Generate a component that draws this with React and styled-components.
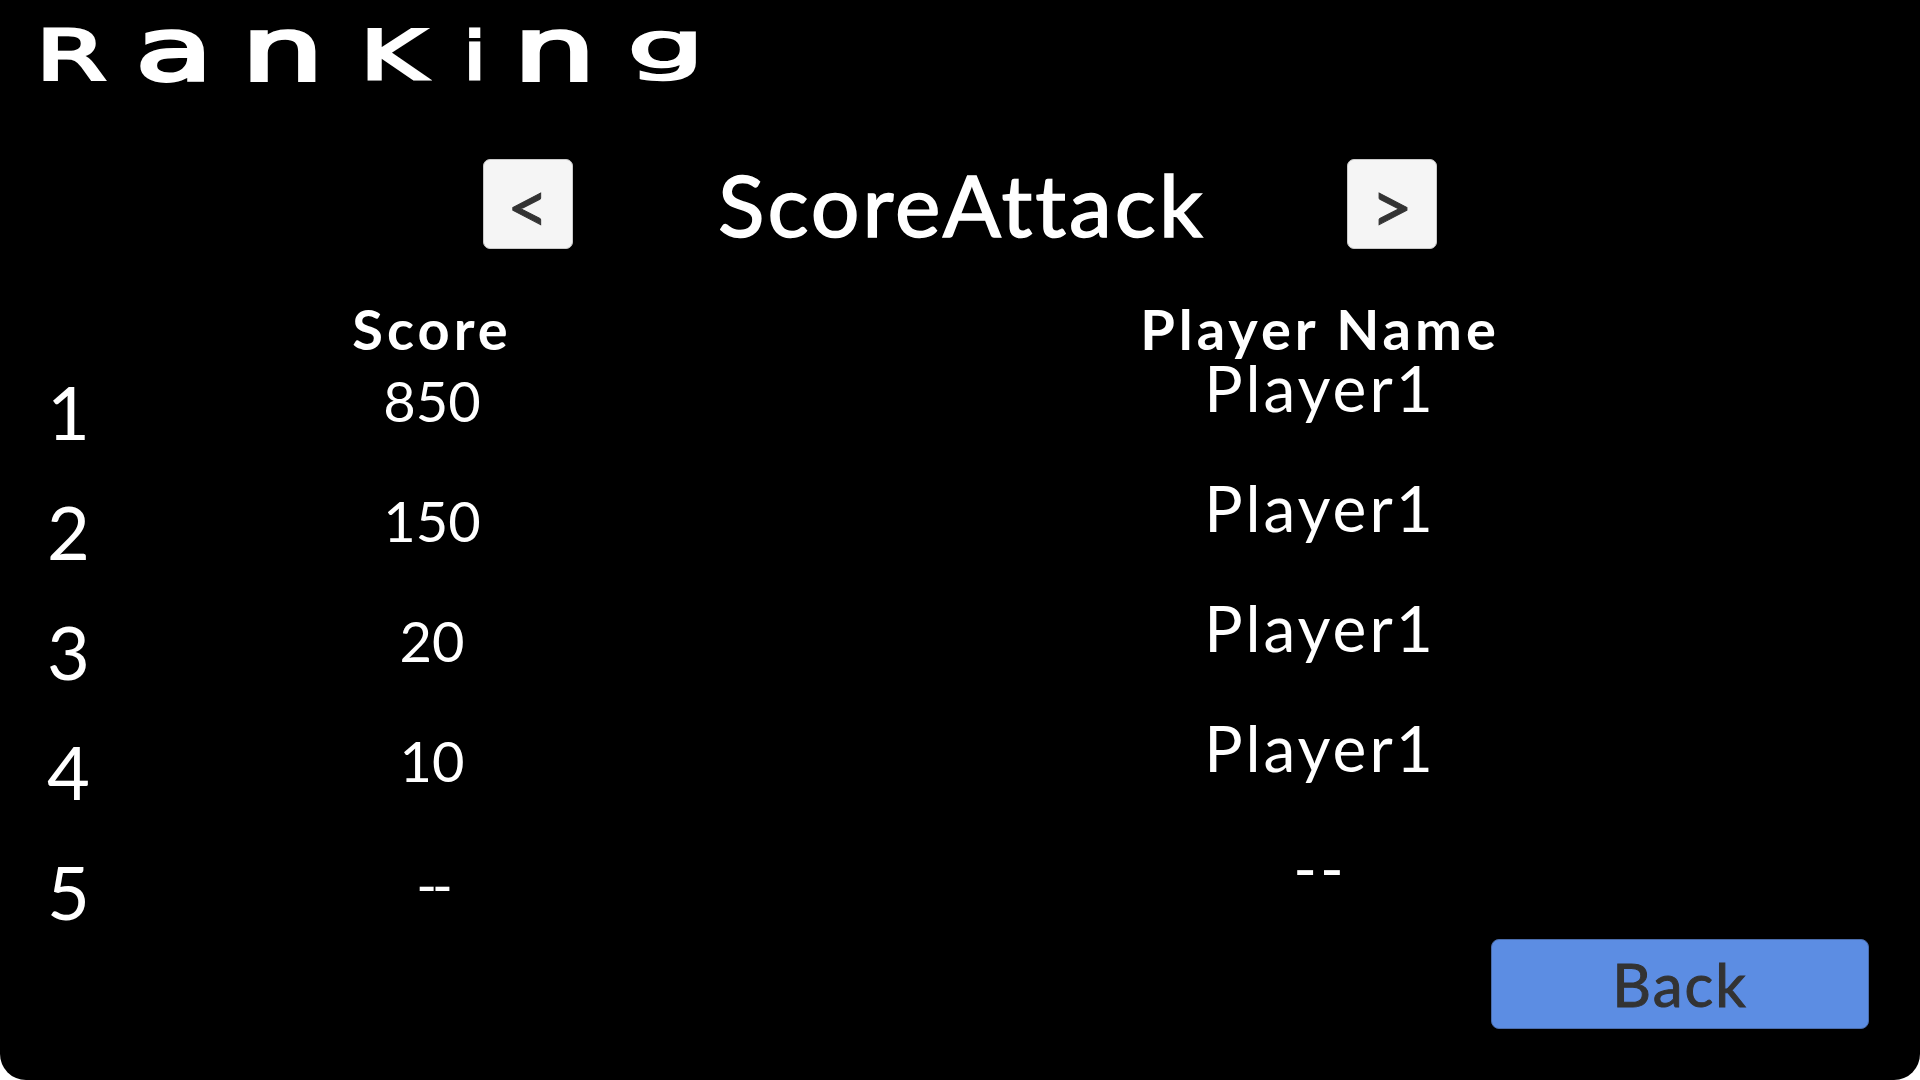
import styled, { createGlobalStyle } from 'styled-components';

const GlobalStyle = createGlobalStyle`
  html, body {
    margin: 0;
    padding: 0;
    background: #fff;
  }
  * {
    box-sizing: border-box;
  }
`;

const Screen = styled.div`
  width: 1920px;
  height: 1080px;
  overflow: hidden;
  background: #000;
  color: #fff;
  border-radius: 0 0 26px 26px;
  font-family: Lato, "Open Sans", sans-serif;
  display: flex;
  flex-direction: column;
`;

const Heading = styled.h1`
  display: flex;
  flex: none;
  align-items: baseline;
  height: 159px;
  margin: 0;
  padding: 20px 0 0 38px;
  font-family: "DejaVu Sans", sans-serif;
  font-size: 70px;
  font-weight: 400;
  line-height: 70px;
  -webkit-text-stroke: 3px #fff;
`;

const Letter = styled.span`
  display: block;
  flex: none;
  width: ${(p) => p.$w}px;
  margin-right: ${(p) => p.$gap}px;
  text-align: center;
  transform-origin: 50% 76%;
  transform: translateY(${(p) => p.$y || 0}px) scale(${(p) => p.$sx}, ${(p) => p.$sy});
`;

const ModeBar = styled.div`
  display: flex;
  flex: none;
  align-items: center;
  justify-content: center;
  gap: 145px;
  height: 90px;
`;

const ArrowButton = styled.button`
  width: 90px;
  height: 90px;
  padding: 0;
  border: 1px solid #c9c9c9;
  border-radius: 7px;
  background: #f5f5f5;
  color: #333;
  font-family: Lato, sans-serif;
  font-size: 72px;
  line-height: 90px;
  -webkit-text-stroke: 1px #333;
`;

const ModeName = styled.div`
  width: 484px;
  padding-right: 4px;
  text-align: center;
  font-size: 86px;
  letter-spacing: 3px;
  line-height: 90px;
  white-space: nowrap;
  -webkit-text-stroke: 1.5px #fff;
`;

const Table = styled.div`
  display: grid;
  flex: none;
  grid-template-columns: 120px 624px 1152px;
  height: 645px;
  margin-top: 45px;
`;

const RankColumn = styled.div`
  display: flex;
  flex-direction: column;
  padding: 58px 0 0 47px;
`;

const Rank = styled.div`
  height: 120px;
  flex: none;
  font-size: 74px;
  line-height: 120px;
`;

const Column = styled.div`
  display: flex;
  flex-direction: column;
  align-items: center;
`;

const ColumnTitle = styled.div`
  height: 70px;
  flex: none;
  font-size: 56px;
  font-weight: 700;
  letter-spacing: 4px;
  line-height: 70px;
`;

const ScoreCell = styled.div`
  height: 120px;
  flex: none;
  font-size: 56px;
  letter-spacing: ${(p) => (p.$empty ? '-5px' : '0')};
  line-height: ${(p) => (p.$empty ? '128px' : '120px')};
  margin-top: ${(p) => (p.$first ? '-23px' : '0')};
`;

const NameCell = styled.div`
  height: 120px;
  flex: none;
  font-size: 64px;
  letter-spacing: 3px;
  line-height: 120px;
  margin-top: ${(p) => (p.$first ? '-36px' : '0')};
`;

const Footer = styled.div`
  display: flex;
  flex: none;
  justify-content: flex-end;
  padding-right: 51px;
`;

const BackButton = styled.button`
  width: 378px;
  height: 90px;
  padding: 0;
  border: 1px solid #4a6cab;
  border-radius: 8px;
  background: #5c8de3;
  color: #333;
  font-family: Lato, sans-serif;
  font-size: 60px;
  letter-spacing: 2px;
  -webkit-text-stroke: 1px #333;
`;

const letters = [
  { c: 'R', w: 66, gap: 36, sx: 1.45, sy: 1 },
  { c: 'a', w: 68, gap: 40, sx: 1.8, sy: 1.25 },
  { c: 'n', w: 69, gap: 41, sx: 1.85, sy: 1.25 },
  { c: 'K', w: 69, gap: 38, sx: 1.42, sy: 0.97 },
  { c: 'i', w: 19, gap: 36, sx: 1.2, sy: 0.95 },
  { c: 'n', w: 69, gap: 45, sx: 1.85, sy: 1.25 },
  { c: 'g', w: 64, gap: 0, sx: 1.72, sy: 0.88, y: -11 },
];

const rows = [
  { rank: 1, score: '850', name: 'Player1' },
  { rank: 2, score: '150', name: 'Player1' },
  { rank: 3, score: '20', name: 'Player1' },
  { rank: 4, score: '10', name: 'Player1' },
  { rank: 5, score: '--', name: '--' },
];

export default function App() {
  return (
    <>
      <GlobalStyle />
      <Screen>
        <Heading>
          {letters.map((l, i) => (
            <Letter key={i} $w={l.w} $gap={l.gap} $sx={l.sx} $sy={l.sy} $y={l.y}>
              {l.c}
            </Letter>
          ))}
        </Heading>

        <ModeBar>
          <ArrowButton>&lt;</ArrowButton>
          <ModeName>ScoreAttack</ModeName>
          <ArrowButton>&gt;</ArrowButton>
        </ModeBar>

        <Table>
          <RankColumn>
            {rows.map((r) => (
              <Rank key={r.rank}>{r.rank}</Rank>
            ))}
          </RankColumn>
          <Column>
            <ColumnTitle>Score</ColumnTitle>
            {rows.map((r, i) => (
              <ScoreCell key={r.rank} $first={i === 0} $empty={r.score === '--'}>
                {r.score}
              </ScoreCell>
            ))}
          </Column>
          <Column>
            <ColumnTitle>Player Name</ColumnTitle>
            {rows.map((r, i) => (
              <NameCell key={r.rank} $first={i === 0}>{r.name}</NameCell>
            ))}
          </Column>
        </Table>

        <Footer>
          <BackButton>Back</BackButton>
        </Footer>
      </Screen>
    </>
  );
}
